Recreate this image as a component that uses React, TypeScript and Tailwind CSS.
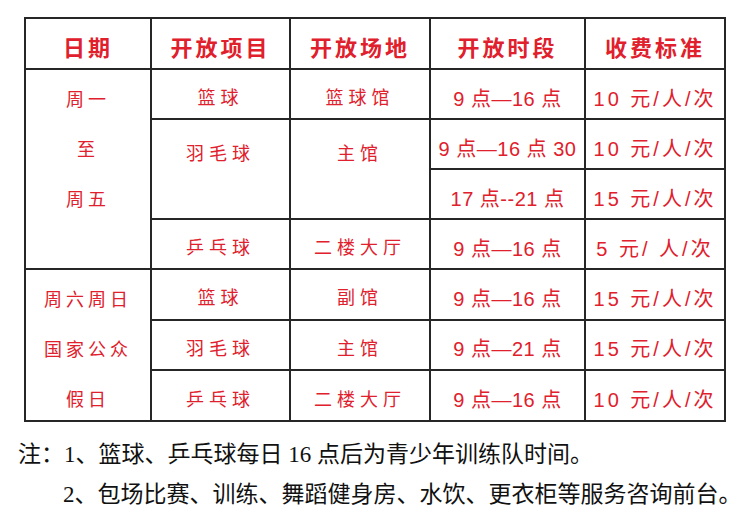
import React from "react";

const cell = "border-2 border-[#262626] text-center align-middle pt-[9px]";
const cjk = "font-['Liberation_Sans','Noto_Sans_CJK_SC',sans-serif]";

type Row = {
  sport?: string;
  sportSpan?: number;
  venue?: string;
  venueSpan?: number;
  time: string;
  fee: string;
};

const weekday: Row[] = [
  { sport: "篮球", venue: "篮球馆", time: "9 点—16 点", fee: "10 元/人/次" },
  { sport: "羽毛球", sportSpan: 2, venue: "主馆", venueSpan: 2, time: "9 点—16 点 30", fee: "10 元/人/次" },
  { time: "17 点--21 点", fee: "15 元/人/次" },
  { sport: "乒乓球", venue: "二楼大厅", time: "9 点—16 点", fee: "5 元/ 人/次" },
];

const weekend: Row[] = [
  { sport: "篮球", venue: "副馆", time: "9 点—16 点", fee: "15 元/人/次" },
  { sport: "羽毛球", venue: "主馆", time: "9 点—21 点", fee: "15 元/人/次" },
  { sport: "乒乓球", venue: "二楼大厅", time: "9 点—16 点", fee: "10 元/人/次" },
];

function BodyRows({ rows, dates }: { rows: Row[]; dates: string[] }) {
  return (
    <>
      {rows.map((r, i) => (
        <tr key={i} className="h-[50px]">
          {i === 0 && (
            <td rowSpan={rows.length} className="border-2 border-[#262626] text-center align-top">
              <div className="flex flex-col items-center leading-[50px] tracking-[4px] translate-y-[5px]">
                {dates.map((d) => (
                  <span key={d}>{d}</span>
                ))}
              </div>
            </td>
          )}
          {r.sport && (
            <td
              rowSpan={r.sportSpan}
              className={`${cell} tracking-[5px] ${r.sportSpan ? "!align-top !pt-[21px]" : ""}`}
            >
              {r.sport}
            </td>
          )}
          {r.venue && (
            <td
              rowSpan={r.venueSpan}
              className={`${cell} tracking-[5px] ${r.venueSpan ? "!align-top !pt-[21px]" : ""}`}
            >
              {r.venue}
            </td>
          )}
          <td className={`${cell} text-[20px] tracking-[0.5px] whitespace-nowrap`}>{r.time}</td>
          <td className={`${cell} text-[20px] tracking-[3px] whitespace-nowrap`}>{r.fee}</td>
        </tr>
      ))}
    </>
  );
}

export default function App() {
  return (
    <div className="w-[750px] h-[530px] bg-white overflow-hidden pt-[17px]">
      <table
        className={`ml-[24px] w-[700px] table-fixed border-collapse text-[#e0202c] text-[18px] ${cjk}`}
      >
        <colgroup>
          <col className="w-[126px]" />
          <col className="w-[139px]" />
          <col className="w-[140px]" />
          <col className="w-[155px]" />
          <col className="w-[140px]" />
        </colgroup>
        <thead>
          <tr className="h-[51px] text-[22px] font-bold">
            <th className={`${cell} tracking-[3px]`}>日期</th>
            <th className={`${cell} tracking-[3px]`}>开放项目</th>
            <th className={`${cell} tracking-[3px]`}>开放场地</th>
            <th className={`${cell} tracking-[3px]`}>开放时段</th>
            <th className={`${cell} tracking-[3px]`}>收费标准</th>
          </tr>
        </thead>
        <tbody>
          <BodyRows rows={weekday} dates={["周一", "至", "周五"]} />
          <BodyRows rows={weekend} dates={["周六周日", "国家公众", "假日"]} />
        </tbody>
      </table>
      <div className="mt-[13px] text-[23px] leading-[40px] text-[#111] font-['Liberation_Serif','Noto_Sans_CJK_SC',serif]">
        <p className="pl-[18px] whitespace-nowrap">注：1、篮球、乒乓球每日 16 点后为青少年训练队时间。</p>
        <p className="pl-[63px] whitespace-nowrap">2、包场比赛、训练、舞蹈健身房、水饮、更衣柜等服务咨询前台。</p>
      </div>
    </div>
  );
}
